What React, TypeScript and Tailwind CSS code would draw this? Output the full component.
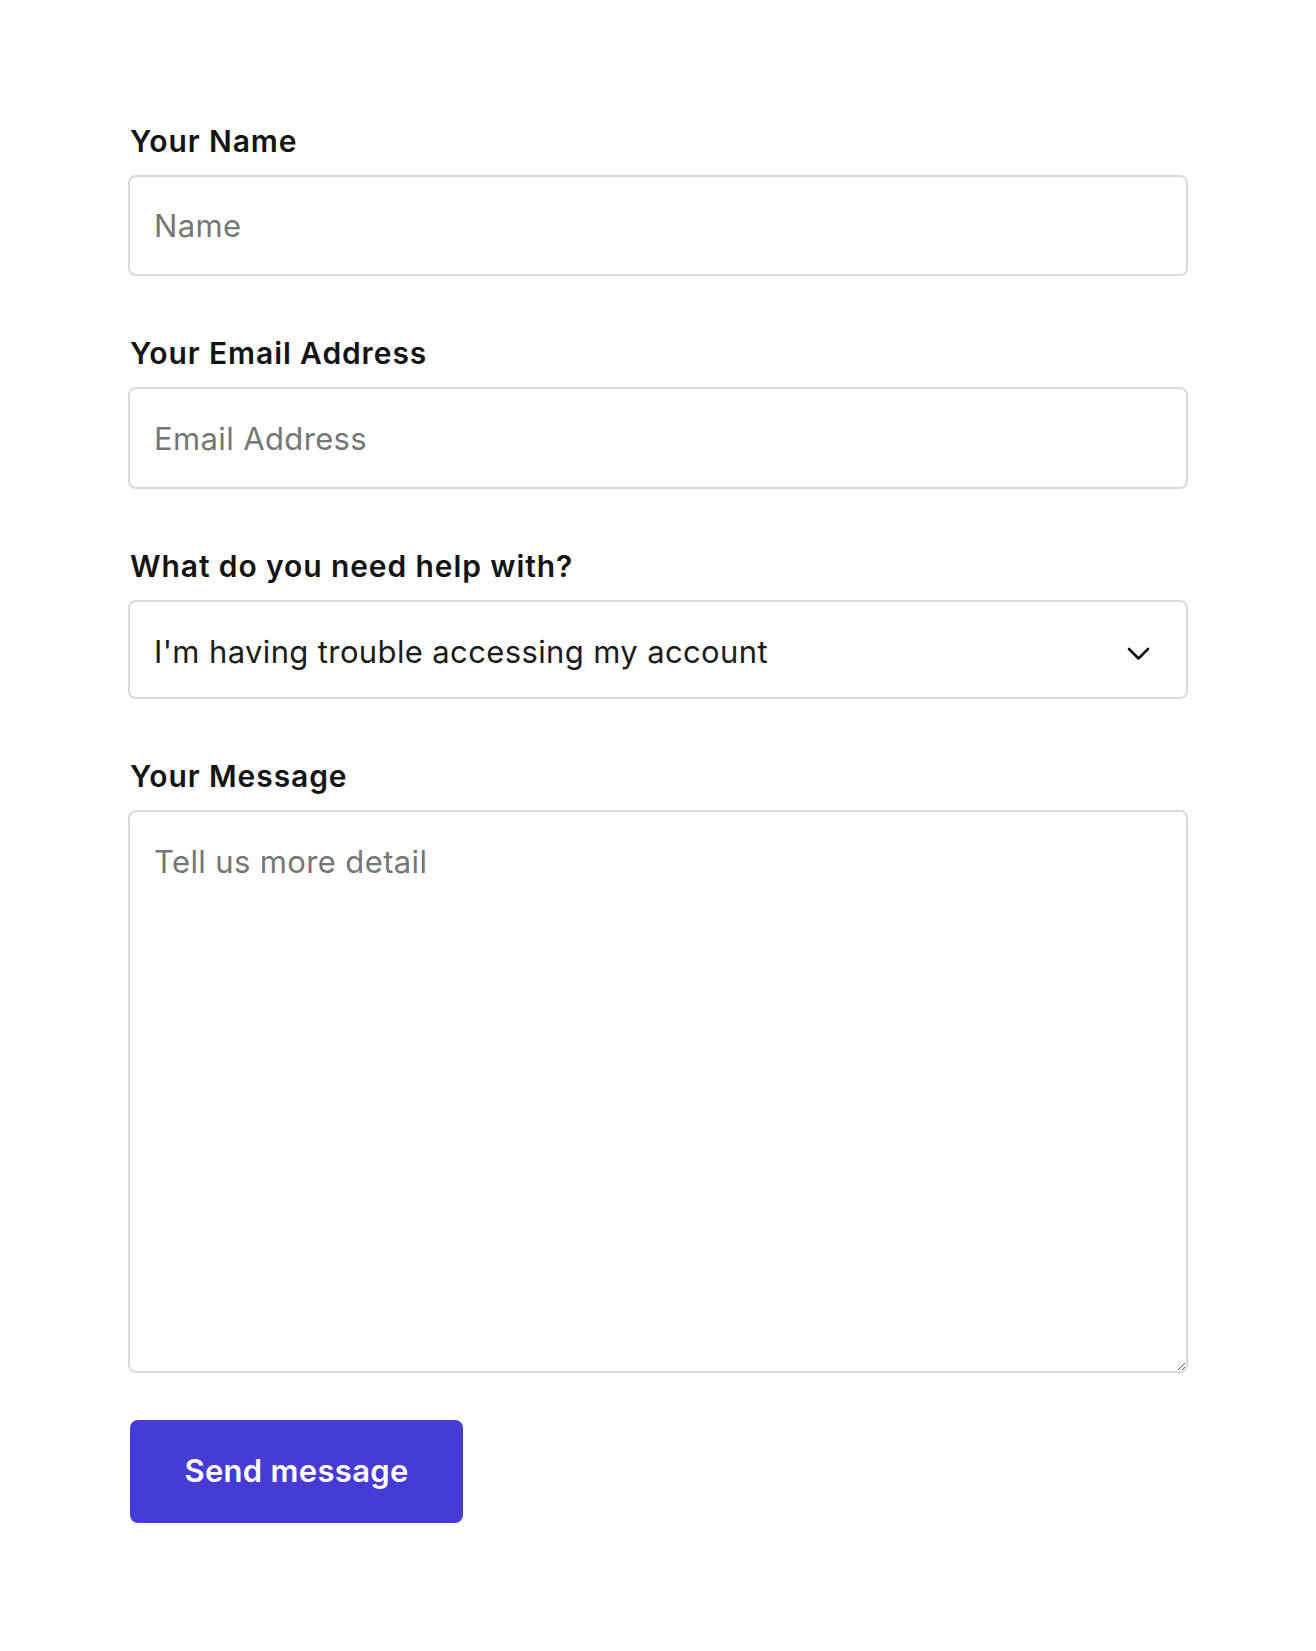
import { useState } from "react";

const font = { fontFamily: "Inter, 'Liberation Sans', sans-serif" };

const Field = ({ label, children }: { label: string; children: React.ReactNode }) => (
    <div className="flex flex-col">
        <label className="text-[30px] leading-9 font-semibold tracking-[0.03em] text-[#141414] mb-4 pl-0.5">
            {label}
        </label>
        {children}
    </div>
);

const inputClass =
    "w-full border-2 border-[#d6d9dd] rounded-lg bg-white px-6 text-[31px] tracking-[0.012em] text-[#1c1c1c] placeholder:text-[#767676] outline-none";

export default function App() {
    const [topic, setTopic] = useState("access");

    return (
        <div className="min-h-[1651px] bg-white px-[128px] pt-[123px]" style={font}>
            <form className="flex flex-col gap-[59px]" onSubmit={(e) => e.preventDefault()}>
                <Field label="Your Name">
                    <input type="text" placeholder="Name" className={`${inputClass} h-[101px]`} />
                </Field>
                <Field label="Your Email Address">
                    <input type="email" placeholder="Email Address" className={`${inputClass} h-[102px]`} />
                </Field>
                <Field label="What do you need help with?">
                    <div className="relative">
                        <select
                            value={topic}
                            onChange={(e) => setTopic(e.target.value)}
                            className={`${inputClass} h-[99px] pt-[6px] appearance-none pr-16`}
                        >
                            <option value="access">I'm having trouble accessing my account</option>
                            <option value="billing">I have a billing question</option>
                            <option value="other">Something else</option>
                        </select>
                        <svg
                            className="absolute right-[38px] top-1/2 -translate-y-1/2 mt-[4px] pointer-events-none"
                            width="23"
                            height="14"
                            viewBox="0 0 23 14"
                            fill="none"
                            stroke="#111"
                            strokeWidth="2.6"
                            strokeLinecap="round"
                            strokeLinejoin="round"
                        >
                            <path d="M2 2 L11.5 11.5 L21 2" />
                        </svg>
                    </div>
                </Field>
                <Field label="Your Message">
                    <textarea
                        placeholder="Tell us more detail"
                        className={`${inputClass} h-[563px] pt-[27px] leading-[45px]`}
                    />
                </Field>
            </form>
            <button
                type="submit"
                className="mt-[47px] ml-0.5 w-[333px] h-[103px] rounded-lg bg-[#473bd7] text-white text-[31px] font-semibold tracking-[0.01em]"
            >
                Send message
            </button>
        </div>
    );
}
